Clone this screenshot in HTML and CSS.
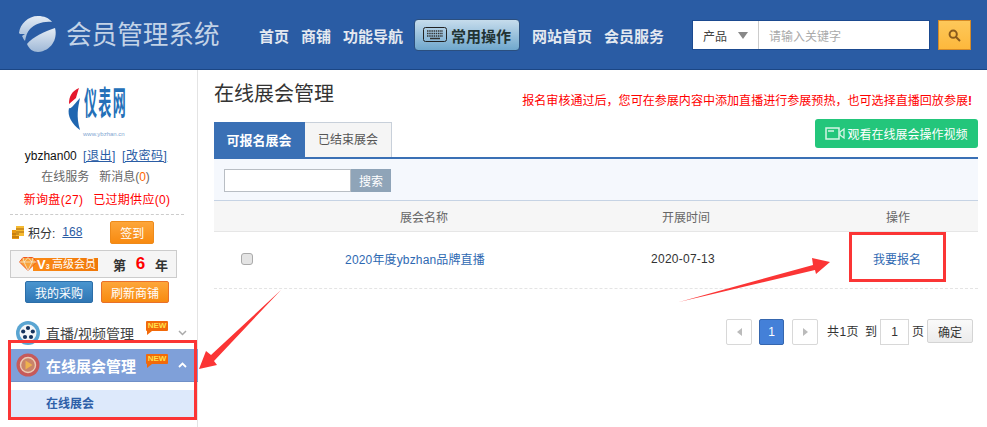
FILE: index.html
```html
<!DOCTYPE html>
<html lang="zh">
<head>
<meta charset="utf-8">
<title>在线展会管理</title>
<link rel="stylesheet" href="styles.css">
</head>
<body>
<div class="app">
  <header class="topbar">
    <svg class="logo-mark" viewBox="0 0 40 38" width="40" height="38">
      <defs><linearGradient id="gl" x1="0" y1="0" x2="0" y2="1"><stop offset="0" stop-color="#e4ecf5"/><stop offset="1" stop-color="#9fb8d6"/></linearGradient></defs>
      <path d="M9 29C14 22 28 16 37 13C40 24 33 36 20 37C15 37 11 34 9 29z" fill="url(#gl)"/>
      <path d="M1 18C2 9 10 1 20 1C26 1 31 3 34 7C25 6 17 9 12 14C9 17 8 21 7 26C5 24 5 22 4 21L7 19L2 19z" fill="url(#gl)"/>
    </svg>
    <div class="logo-text">会员管理系统</div>
    <nav class="nav">
      <a class="nav-link">首页</a>
      <a class="nav-link">商铺</a>
      <a class="nav-link">功能导航</a>
      <a class="nav-active">
        <svg width="24" height="16" viewBox="0 0 24 16"><rect x=".5" y=".5" width="23" height="14" rx="2" fill="none" stroke="#222"/><path d="M4 4h16M4 6.5h16M4 9h16" stroke="#333" stroke-width="1.6" stroke-dasharray="1.5 .7"/><path d="M7 11.5h10" stroke="#333" stroke-width="1.5"/></svg>
        常用操作
      </a>
      <a class="nav-link">网站首页</a>
      <a class="nav-link">会员服务</a>
    </nav>
    <div class="searchbox">
      <div class="search-select">产品<span class="caret"></span></div>
      <div class="search-input">请输入关键字</div>
    </div>
    <button class="search-btn" aria-label="搜索">
      <svg width="13" height="13" viewBox="0 0 13 13"><circle cx="5.2" cy="5.2" r="3.6" fill="none" stroke="#8a5a1c" stroke-width="2"/><path d="M8 8l4 4" stroke="#8a5a1c" stroke-width="2"/></svg>
    </button>
  </header>

  <div class="body">
    <aside class="side">
      <div class="avatar">
        <svg class="avatar-swoosh" width="14" height="44" viewBox="0 0 14 44"><path d="M12 0C5 3 2 8 2 16l7-6c1-4 2-7 3-10z" fill="#e4172c"/><path d="M13 10C11 20 9 28 13 42 5 36 0 28 2 20c2 2 6-5 11-10z" fill="#1f66b0"/></svg>
        <span class="avatar-text">仪</span><span class="avatar-text">表</span><span class="avatar-text">网</span>
        <span class="avatar-url">www.ybzhan.cn</span>
      </div>
      <div class="user-line">ybzhan00 <a class="ulink">[退出]</a> <a class="ulink">[改密码]</a></div>
      <div class="msg-line"><span>在线服务</span><span>新消息(<b class="orange">0</b>)</span></div>
      <div class="red-line"><span>新询盘(27)</span><span>已过期供应(0)</span></div>
      <div class="score-row">
        <svg width="12" height="13" viewBox="0 0 12 13"><rect x="0" y="4" width="7" height="9" fill="#e99a12"/><rect x="4" y="0" width="8" height="10" fill="#f6bb32"/><path d="M4 3h8M4 6h8M0 8h7M0 11h7" stroke="#a8650a"/></svg>
        <span class="score-label">积分:</span><a class="score-num">168</a>
        <button class="btn-sign">签到</button>
      </div>
      <div class="member">
        <div class="member-badge">
          <svg class="gem" width="18" height="14" viewBox="0 0 18 14"><path d="M4 .5h10l3.500 4.500L9 13.500.5 5z" fill="#f9a23a" stroke="#f0561d"/><path d="M.5 5h17M5 5l4 8.500L13 5M4 .5L5 5l4-4.500L13 5l1-4.500" stroke="#f4f0e4" fill="none" stroke-width=".7"/></svg>
          <span class="v3">V<small class="v3-sub">3</small></span><span>高级会员</span>
        </div>
        <span class="year-txt year-first">第</span><b class="year-num">6</b><span class="year-txt">年</span>
      </div>
      <div class="two-btn">
        <button class="btn-blue">我的采购</button>
        <button class="btn-orange">刷新商铺</button>
      </div>
      <div class="menu-item">
        <svg width="24" height="24" viewBox="0 0 24 24"><circle cx="12" cy="12" r="12" fill="#5aa5d2"/><circle cx="12" cy="12" r="8.500" fill="#f4f6f8"/><g fill="#16335e"><circle cx="12" cy="7" r="2.100"/><circle cx="16.800" cy="10.500" r="2.100"/><circle cx="15" cy="16" r="2.100"/><circle cx="9" cy="16" r="2.100"/><circle cx="7.200" cy="10.500" r="2.100"/></g></svg>
        <span class="menu-text">直播/视频管理</span>
        <span class="new">NEW</span>
        <svg class="chev" width="9" height="6" viewBox="0 0 9 6"><path d="M1 1l3.500 3.500L8 1" fill="none" stroke="#aaa" stroke-width="1.500"/></svg>
      </div>
      <div class="menu-item menu-on">
        <svg width="24" height="24" viewBox="0 0 24 24"><circle cx="12" cy="12" r="11.500" fill="#c65a5a"/><circle cx="12" cy="12" r="7.500" fill="#c9846a" stroke="#ecccb6" stroke-width="1.400"/><path d="M9.500 7.500v9l7-4.500z" fill="#eeb24d"/></svg>
        <span class="menu-text">在线展会管理</span>
        <span class="new">NEW</span>
        <svg class="chev" width="9" height="6" viewBox="0 0 9 6"><path d="M1 5l3.500-3.500L8 5" fill="none" stroke="#fff" stroke-width="1.800"/></svg>
      </div>
      <div class="sub-item">在线展会</div>
    </aside>

    <main class="main">
      <div class="title-row">
        <h1 class="title">在线展会管理</h1>
        <p class="notice">报名审核通过后，您可在参展内容中添加直播进行参展预热，也可选择直播回放参展<b>!</b></p>
      </div>
      <div class="tab-row">
        <div class="tab tab-on">可报名展会</div>
        <div class="tab">已结束展会</div>
        <button class="btn-video">
          <svg width="20" height="13" viewBox="0 0 20 13"><rect x="1" y="1" width="13" height="11" fill="none" stroke="#d6f5e6" stroke-width="1.500"/><path d="M3 4h6" stroke="#d6f5e6" stroke-width="1.500"/><path d="M15 5l4-3v9l-4-3z" fill="none" stroke="#d6f5e6" stroke-width="1.300"/></svg>
          观看在线展会操作视频
        </button>
      </div>
      <div class="filter">
        <div class="filter-input"></div>
        <button class="filter-btn">搜索</button>
      </div>
      <div class="thead">
        <span>展会名称</span><span>开展时间</span><span></span><span>操作</span>
      </div>
      <div class="trow">
        <span class="check"></span>
        <a class="tlink tname">2020年度ybzhan品牌直播</a>
        <span class="tdate">2020-07-13</span>
        <a class="tlink">我要报名</a>
      </div>
      <div class="pager">
        <span class="pg"><i class="arrow-l"></i></span>
        <span class="pg pg-on">1</span>
        <span class="pg"><i class="arrow-r"></i></span>
        <span class="pg-total">共1页</span>
        <span class="pg-to">到</span>
        <span class="pg-input">1</span>
        <span class="pg-unit">页</span>
        <button class="pg-ok">确定</button>
      </div>
    </main>
  </div>

  <svg class="marks" width="987" height="427" viewBox="0 0 987 427">
    <rect x="9.500" y="341.500" width="186" height="77" fill="none" stroke="#fb3535" stroke-width="3"/>
    <rect x="850.500" y="233.500" width="94" height="47" fill="none" stroke="#fb3535" stroke-width="3"/>
    <polygon points="281,290 214,361 217,365 199,369 206,351 211,355" fill="#fb3535"/>
    <polygon points="679,302 813,265 812,258 830,262 816,274 815,270" fill="#fb3535"/>
  </svg>
</div>
</body>
</html>
```

FILE: styles.css
```css
* { box-sizing: border-box; }
html, body { margin: 0; padding: 0; }
body { font-family: "Liberation Sans", "Noto Sans CJK SC", sans-serif; font-size: 12px; color: #333; background: #fff; }
button { font-family: inherit; border: 0; padding: 0; }
.app { position: relative; width: 987px; height: 427px; overflow: hidden; display: flex; flex-direction: column; }

.topbar { flex: none; height: 70px; background: #2a5ca4; border-bottom: 1px solid #1b4684; display: flex; align-items: center; padding: 1px 16px 0 18px; }
.logo-mark { flex: none; margin-top: -3px; }
.logo-text { flex: none; width: 160px; margin-left: 8px; font-size: 25.6px; line-height: 30px; color: #c3d3e7; white-space: nowrap; }
.nav { display: flex; align-items: center; margin-left: 33px; font-size: 15px; font-weight: 700; color: #e4e9f0; white-space: nowrap; }
.nav-link { margin-right: 12px; }
.nav-active { width: 106px; height: 32px; margin: 0 12px 0 -1px; display: flex; align-items: center; justify-content: center; gap: 4px; border-radius: 4px; border: 1px solid #2b4f7f; background: linear-gradient(#c6dcec, #6fa7cd); color: #233; }
.searchbox { width: 238px; height: 30px; margin-left: 16px; display: flex; background: #fff; border: 1px solid #1b4a90; }
.search-select { width: 66px; display: flex; align-items: center; padding-left: 10px; font-size: 12px; color: #444; border-right: 1px solid #ccc; }
.caret { margin-left: 11px; border-style: solid; border-color: #888 transparent transparent; border-width: 7px 5.5px 0; }
.search-input { display: flex; align-items: center; padding-left: 10px; font-size: 12px; color: #aaa; }
.search-btn { width: 33px; height: 30px; margin-left: 8px; display: flex; align-items: center; justify-content: center; background: linear-gradient(#fdc85a, #fdb83c); border: 1px solid #d58a26; }

.body { flex: 1; display: flex; min-height: 0; }
.side { flex: none; width: 198px; padding-top: 15px; border-right: 1px solid #e4e4e4; display: flex; flex-direction: column; }
.avatar { position: relative; width: 60px; height: 55px; margin-left: 67px; display: flex; align-items: flex-start; padding-left: 17px; font-size: 13px; font-weight: 700; color: #2470b8; }
.avatar-swoosh { position: absolute; left: 0; top: 3px; }
.avatar-text { width: 15px; line-height: 40px; transform: scaleY(2.5); transform-origin: center; }
.avatar-url { position: absolute; left: 16px; bottom: 2px; font-size: 6px; line-height: 8px; font-weight: 400; color: #7fa6d2; white-space: nowrap; }
.user-line { margin-top: 8px; text-align: center; color: #111; padding-right: 5px; line-height: 17px; word-spacing: 3px; }
.ulink { color: #2a5ca4; text-decoration: underline; letter-spacing: .5px; }
.msg-line { margin-top: 4px; display: flex; justify-content: center; gap: 10px; color: #666; line-height: 17px; padding-right: 6px; }
.orange { color: #f60; font-weight: 400; }
.red-line { margin-top: 6px; display: flex; justify-content: center; gap: 10px; color: #f00; line-height: 17px; padding-right: 3px; letter-spacing: .3px; }
.score-row { margin: 5px 13px 0 10px; height: 35px; border-top: 1px dashed #ccc; display: flex; align-items: center; }
.score-row svg { margin-left: 2px; }
.score-label { margin-left: 4px; color: #333; }
.score-num { margin-left: 7px; color: #2a5ca4; text-decoration: underline; }
.btn-sign { width: 44px; height: 23px; margin-left: 28px; color: #fff; font-size: 12px; border-radius: 2px; background: linear-gradient(#fda63a, #f88a10); border: 1px solid #ee8a1a; }
.member { width: 167px; height: 28px; margin: 1px 0 0 10px; background: #f5f5f5; border: 1px solid #ccc; display: flex; align-items: center; }
.member-badge { position: relative; width: 65px; height: 13px; margin-left: 22px; padding-left: 19px; background: linear-gradient(90deg, #fb8a16, #f07808); color: #fff; font-size: 11px; line-height: 13px; white-space: nowrap; }
.gem { position: absolute; left: -14px; top: -1px; }
.v3 { position: absolute; left: 4px; top: 0; font-weight: 700; font-size: 13px; }
.v3-sub { font-size: 7px; }
.year-txt { font-weight: 700; font-size: 13px; color: #333; width: 13px; }
.year-first { margin-left: 15px; }
.year-num { margin: 0 9px; font-size: 17px; color: #f00; width: 11px; text-align: center; }
.two-btn { margin: 3px 0 0 25px; display: flex; gap: 8px; }
.btn-blue, .btn-orange { width: 68px; height: 22px; color: #fff; font-size: 12px; border-radius: 2px; }
.btn-blue { background: linear-gradient(#4a95cf, #2f76b4); border: 1px solid #2b6ea8; }
.btn-orange { background: linear-gradient(#fda63a, #f88a10); border: 1px solid #e8702a; }
.menu-item { position: relative; display: flex; align-items: center; height: 32px; padding-left: 16px; margin-top: 14px; }
.menu-item svg:first-child { flex: none; }
.menu-text { margin-left: 6px; font-size: 14px; color: #444; white-space: nowrap; }
.new { position: absolute; left: 146px; top: 4px; width: 22px; height: 10px; background: #f26a0a; color: #ffe14a; font-size: 8px; font-weight: 700; line-height: 10px; text-align: center; border-radius: 1px; }
.new::after { content: ""; position: absolute; left: 1px; top: 10px; border-style: solid; border-color: #f26a0a transparent transparent #f26a0a; border-width: 4px 5px 0 0; }
.chev { position: absolute; left: 178px; top: 13px; }
.menu-on { margin-top: 0; height: 33px; background: #7fa0d9; border-bottom: 1px solid #7090c8; margin-left: 11px; padding-left: 5px; margin-right: -1px; }
.menu-on .menu-text { color: #fff; font-weight: 700; font-size: 15px; }
.menu-on .new { left: 135px; top: 5px; }
.menu-on .chev { left: 167px; }
.sub-item { height: 28px; margin: 8px 3px 0 11px; padding-left: 35px; background: #dde9fb; color: #2e5fa8; font-weight: 700; line-height: 28px; }

.main { flex: 1; min-width: 0; padding: 0 9px 0 16px; display: flex; flex-direction: column; }
.title-row { height: 49px; display: flex; justify-content: space-between; }
.title { margin: 12px 0 0; font-size: 20px; font-weight: 400; line-height: 24px; color: #333; }
.notice { margin: 23px 6px 0 0; color: #f00; font-size: 12.05px; line-height: 16px; white-space: nowrap; }
.tab-row { position: relative; height: 40px; display: flex; align-items: flex-end; border-bottom: 2px solid #3a70b5; }
.tab { width: 87px; height: 35px; background: #f5f5f5; border: 1px solid #c8d0da; border-bottom: 0; border-left: 0; color: #555; text-align: center; line-height: 35px; }
.tab-on { width: 91px; background: #3a70b5; border-color: #3a70b5; color: #fff; font-weight: 700; font-size: 13px; }
.btn-video { margin: 0 0 0 auto; width: 163px; height: 29px; display: flex; align-items: center; justify-content: center; gap: 2px; background: #23c67b; color: #fff; font-size: 12px; border-radius: 3px; align-self: flex-start; }
.filter { height: 42px; background: #f5f8fd; display: flex; align-items: center; padding: 1px 0 0 10px; border-bottom: 1px solid #c6d3e4; }
.filter-input { width: 127px; height: 23px; background: #fff; border: 1px solid #b9bec4; }
.filter-btn { width: 40px; height: 23px; background: #8fa4b8; color: #fff; font-size: 12px; }
.thead { flex: none; height: 31px; display: grid; grid-template-columns: 420px 104px 80px 160px; align-items: center; background: #f6f6f6; border-bottom: 1px solid #e6e6e6; color: #666; text-align: center; }
.trow { flex: none; height: 57px; padding-bottom: 3px; display: grid; grid-template-columns: 66px 270px 266px 162px; align-items: center; border-bottom: 1px dashed #e4e4e4; text-align: center; color: #333; }
.check { justify-self: center; width: 12px; height: 12px; margin-top: 1px; background: #e4e4e4; border: 1px solid #aaa; border-radius: 3px; }
.tlink { color: #2e69b2; }
.tname { letter-spacing: .15px; }
.tdate { letter-spacing: .25px; }
.pager { margin-top: 30px; padding-right: 5px; display: flex; justify-content: flex-end; align-items: flex-start; color: #333; line-height: 26px; }
.pg { width: 26px; height: 26px; margin-right: 7px; display: flex; align-items: center; justify-content: center; border: 1px solid #d8d8d8; border-radius: 2px; background: #fff; }
.pg-on { width: 25px; margin-right: 8px; background: #4480d8; border-color: #3566ae; color: #fff; }
.arrow-l, .arrow-r { border: 4px solid transparent; }
.arrow-l { border-right: 5px solid #bbb; border-left: 0; }
.arrow-r { border-left: 5px solid #bbb; border-right: 0; }
.pg-total { margin-left: 2px; letter-spacing: .4px; white-space: nowrap; }
.pg-to { margin-left: 6px; }
.pg-input { width: 29px; height: 26px; margin-left: 3px; display: flex; align-items: center; justify-content: center; border: 1px solid #d8d8d8; }
.pg-unit { margin-left: 3px; }
.pg-ok { width: 46px; height: 24px; margin-left: 3px; background: linear-gradient(#fafafa, #ececec); border: 1px solid #d4d4d4; color: #333; font-size: 12px; border-radius: 2px; }

.marks { position: absolute; left: 0; top: 0; pointer-events: none; }
```
